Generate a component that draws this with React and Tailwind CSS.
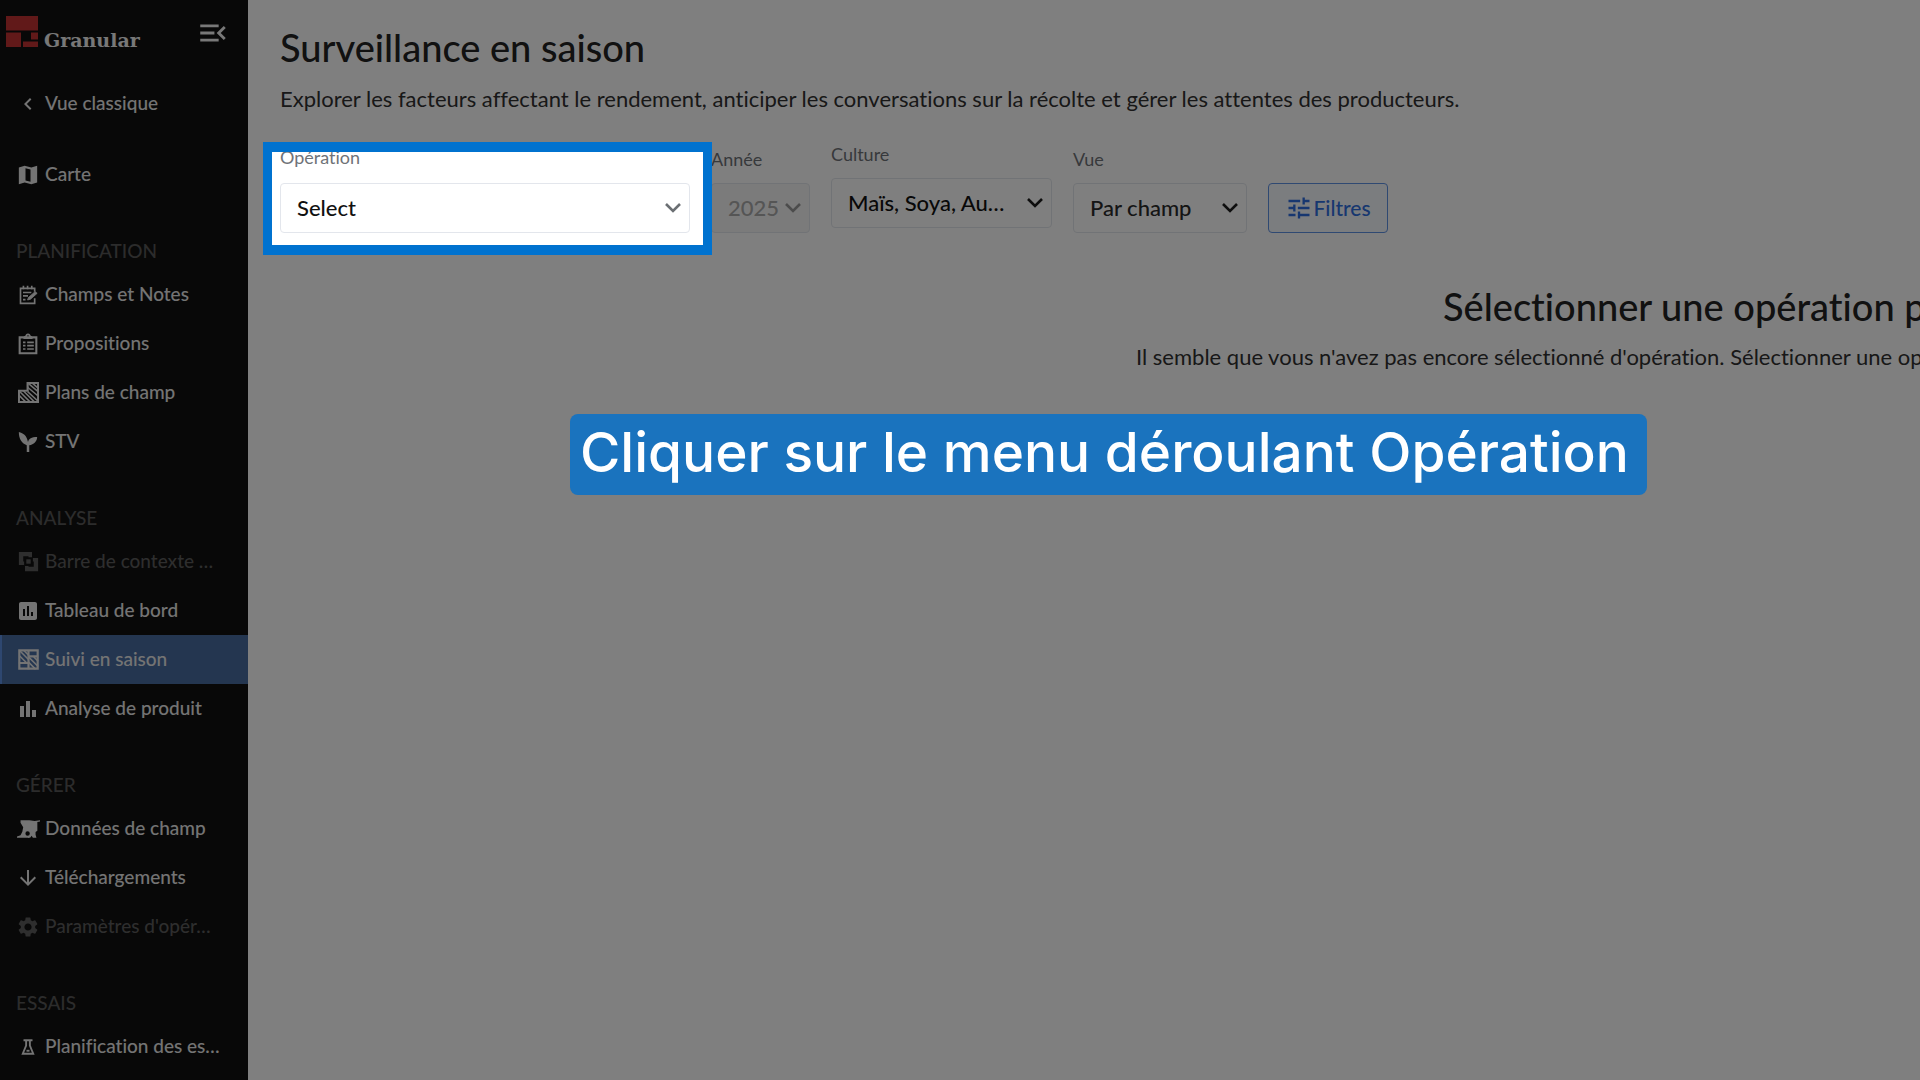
import React from 'react';
import { MdMenuOpen, MdChevronLeft, MdPoll, MdBarChart, MdArrowDownward, MdSettings, MdTune } from 'react-icons/md';

const MapIcon = () => (
  <svg width="20" height="20" viewBox="0 0 24 24" fill="currentColor">
    <path fillRule="evenodd" d="M1 3l7-2 8 2 7-2v20l-7 2-8-2-7 2zM9 4v14.500l6 1.500V5.500z" />
  </svg>
);

const NotesIcon = () => (
  <svg width="20" height="20" viewBox="0 0 24 24" fill="none" stroke="currentColor" strokeWidth="2">
    <path d="M20 8V4H3v18h17v-6" />
    <path d="M6.500 5V1M11.500 5V1M16.500 5V1M6 9h10M6 13h6M6 17.500h3" />
    <path d="M11.500 18l1-3 8-7 2.500 2-8 7z" fill="currentColor" strokeWidth="1" />
  </svg>
);

const ClipboardIcon = () => (
  <svg width="20" height="22" viewBox="0 0 24 26" fill="none" stroke="currentColor" strokeWidth="2">
    <path d="M2 5h20v19H2z" strokeWidth="2.500" />
    <path d="M7.500 6c0-2 2-2 2.500-2.500a2 2 0 0 1 4 0c.5.5 2.500.5 2.500 2.500z" />
    <path d="M6 11h3M11 11h8M6 15h3M11 15h8M6 19h3M11 19h8" />
  </svg>
);

const PlotsIcon = () => (
  <svg width="21" height="21" viewBox="0 0 24 24" fill="none" stroke="currentColor" strokeWidth="1.800">
    <path d="M11 1h12v22H1V10h10z" strokeWidth="2.500" />
    <path d="M11 1l12 10M11 6l12 10M11 11l12 11M6 10l13 13M1 10l13 13M1 15l8 8M16 1l7 6" />
  </svg>
);

const SproutIcon = () => (
  <svg width="20" height="22" viewBox="0 0 24 26" fill="currentColor">
    <path d="M1 1c8 2 10 7 11 12 1-4 4-6 11-6 0 5-4 9-9.500 10v8h-3v-8C4 14 1 9 1 1z" />
  </svg>
);

const ContextIcon = () => (
  <svg width="21" height="21" viewBox="0 0 24 24" fill="currentColor">
    <path d="M1 1h15v6h-4V6H6v6h1v4H1z" />
    <path d="M23 23H8v-6h4v1h6v-6h-1V8h6z" />
    <path d="M9.500 9.500h5v5h-5z" />
  </svg>
);

const SeasonIcon = () => (
  <svg width="21" height="21" viewBox="0 0 24 24" fill="none" stroke="currentColor" strokeWidth="1.800">
    <path d="M1.500 1.500h21v21h-21z" strokeWidth="2.500" />
    <path d="M12 1v22M12 8.500h11M1 16h11" strokeWidth="2.500" />
    <path d="M2 2l10 10M7 2l5 5M2 8l8 8M12 9l11 11M18 9l5 5M12 15l8 8" />
  </svg>
);

const FieldDataIcon = () => (
  <svg width="23" height="20" viewBox="0 0 26 22" fill="currentColor">
    <path
      fillRule="evenodd"
      d="M4 1h10l6 1 6-1v1.500l-3 .5v10l-2 1.500v3l1 3.500h-4l-1.500-2.500A4 4 0 0 1 12 21H0v-1.500l4-1.500 2-4 1-5-3-5zM12 13.500a2.500 2.500 0 1 0 0 5 2.500 2.500 0 0 0 0-5z"
    />
  </svg>
);

const FlaskIcon = () => (
  <svg width="18" height="18" viewBox="0 0 24 24" fill="none" stroke="currentColor" strokeWidth="2.500">
    <path d="M6 3h12M9.500 3v7L5 21h14l-4.500-11V3" />
    <path d="M10 17h4" />
  </svg>
);

const Chevron = ({ className }) => (
  <svg
    className={`pointer-events-none absolute right-2 top-1/2 -translate-y-1/2 ${className}`}
    width="18"
    height="12"
    viewBox="0 0 18 12"
    fill="none"
    stroke="currentColor"
    strokeWidth="2.600"
  >
    <path d="M2 2l7 7 7-7" />
  </svg>
);

const sections = [
  {
    title: 'PLANIFICATION',
    items: [
      { label: 'Champs et Notes', icon: NotesIcon },
      { label: 'Propositions', icon: ClipboardIcon },
      { label: 'Plans de champ', icon: PlotsIcon },
      { label: 'STV', icon: SproutIcon },
    ],
  },
  {
    title: 'ANALYSE',
    items: [
      { label: 'Barre de contexte …', icon: ContextIcon, disabled: true },
      { label: 'Tableau de bord', icon: MdPoll },
      { label: 'Suivi en saison', icon: SeasonIcon, active: true },
      { label: 'Analyse de produit', icon: MdBarChart },
    ],
  },
  {
    title: 'GÉRER',
    items: [
      { label: 'Données de champ', icon: FieldDataIcon },
      { label: 'Téléchargements', icon: MdArrowDownward },
      { label: "Paramètres d'opér…", icon: MdSettings, disabled: true },
    ],
  },
  {
    title: 'ESSAIS',
    items: [{ label: 'Planification des es…', icon: FlaskIcon }],
  },
];

const NavItem = ({ label, icon: Icon, active, disabled }) => {
  let tone = 'border-transparent text-[#e8e8e8]';
  if (disabled) tone = 'border-transparent text-[#5c5c5c]';
  if (active) tone = 'border-[#5d8fe0] bg-[#486ca0] text-[#e8e8e8]';
  return (
    <a
      href="#"
      aria-disabled={disabled}
      className={`flex h-[49px] items-center gap-[7px] whitespace-nowrap border-l-2 pl-4 text-[19px] font-medium ${tone}`}
    >
      <span className="flex w-5 shrink-0 justify-center [&>svg]:shrink-0">
        <Icon size={24} />
      </span>
      {label}
    </a>
  );
};

const Sidebar = () => (
  <nav className="w-[248px] shrink-0 overflow-hidden bg-[#101010]">
    <div className="flex h-[79px] items-start justify-between pl-1.5 pr-[18px] pt-4">
      <div className="flex gap-1.5">
        <svg width="32" height="32" viewBox="0 0 32 32" fill="#c23232">
          <path d="M0 0h32v14.500H0zM0 16.500h15V31H0zM25 16.500h7v7h-7zM17 25.500h15V31H17z" />
        </svg>
        <span className="pt-3 font-['DejaVu_Serif',serif] text-[19px] font-bold leading-6 text-[#f0f0f0]">
          Granular
        </span>
      </div>
      <button type="button" aria-label="Réduire le menu" className="text-[#f0f0f0]">
        <MdMenuOpen size={34} />
      </button>
    </div>
    <NavItem label="Vue classique" icon={MdChevronLeft} />
    <div className="h-[22px]" />
    <NavItem label="Carte" icon={MapIcon} />
    {sections.map((section) => (
      <div key={section.title}>
        <h2 className="h-[71px] pl-4 pt-10 text-[19px] font-medium leading-6 text-[#585858]">{section.title}</h2>
        {section.items.map((item) => (
          <NavItem key={item.label} {...item} />
        ))}
      </div>
    ))}
  </nav>
);

const Field = ({ id, label, value, className, labelClass = 'mb-3', selectClass, chevronClass, disabled }) => (
  <div className={className}>
    <label htmlFor={id} className={`block text-[18px] leading-6 text-[#6f7378] ${labelClass}`}>
      {label}
    </label>
    <div className="relative">
      <select
        id={id}
        disabled={disabled}
        className={`h-[50px] w-full appearance-none rounded border border-[#e3e6ec] pb-0.5 pl-4 text-[22px] font-medium ${selectClass}`}
      >
        <option>{value}</option>
      </select>
      <Chevron className={chevronClass} />
    </div>
  </div>
);

const Filters = () => (
  <div className="flex items-end gap-[21px]">
    <Field
      id="operation"
      label="Opération"
      value="Select"
      className="w-[410px]"
      labelClass="mb-3.5"
      selectClass="bg-white text-[#111111]"
      chevronClass="text-[#6b6f73]"
    />
    <Field
      id="annee"
      label="Année"
      value="2025"
      className="w-[99px]"
      selectClass="bg-[#f7f7f7] text-[#aaaaaa] opacity-100"
      chevronClass="text-[#999999]"
      disabled
    />
    <Field
      id="culture"
      label="Culture"
      value="Maïs, Soya, Au…"
      className="mb-[5px] w-[221px]"
      selectClass="bg-white text-[#111111]"
      chevronClass="text-[#1c1c1c]"
    />
    <Field
      id="vue"
      label="Vue"
      value="Par champ"
      className="w-[174px]"
      selectClass="bg-white text-[#2a2a2a]"
      chevronClass="text-[#1c1c1c]"
    />
    <button
      type="button"
      className="flex h-[50px] w-[120px] items-center justify-center rounded border border-[#5f92e4] bg-[#f7faff] text-[21px] font-medium text-[#2f6fe0]"
    >
      <MdTune size={28} className="shrink-0" />
      Filtres
    </button>
  </div>
);

const EmptyState = () => (
  <div className="whitespace-nowrap pt-12">
    <h2 className="pl-[1163px] text-[38px] font-medium leading-[50px] text-[#222222]">
      Sélectionner une opération pour commencer
    </h2>
    <p className="pl-[856px] pt-3 text-[22px] leading-7 text-[#303030]">
      Il semble que vous n'avez pas encore sélectionné d'opération. Sélectionner une opération pour commencer.
    </p>
  </div>
);

// Dims everything but the highlighted field
const Spotlight = () => (
  <div className="pointer-events-none absolute left-[263px] top-[142px] h-[113px] w-[449px] border-x-9 border-y-10 border-[#0072cf] shadow-[0_0_0_2400px_rgba(0,0,0,0.5)]" />
);

const Callout = () => (
  <div className="absolute left-[570px] top-[414px] flex h-[81px] items-center whitespace-nowrap rounded-lg bg-[#1a73be] pb-1 pl-2.5 pr-[18px] font-['Inter',sans-serif] text-[55px] font-medium text-white">
    Cliquer sur le menu déroulant Opération
  </div>
);

export default function App() {
  return (
    <div className="relative flex h-screen overflow-hidden bg-white font-['Lato',sans-serif] [font-variant-ligatures:none]">
      <Sidebar />
      <main className="min-w-0 flex-1 overflow-hidden pl-8 pt-[22px]">
        <h1 className="text-[38px] font-medium leading-[50px] text-[#222222]">Surveillance en saison</h1>
        <p className="mb-[29px] mt-[13px] text-[22px] leading-7 text-[#303030]">
          Explorer les facteurs affectant le rendement, anticiper les conversations sur la récolte et gérer les attentes
          des producteurs.
        </p>
        <Filters />
        <EmptyState />
      </main>
      <Spotlight />
      <Callout />
    </div>
  );
}
